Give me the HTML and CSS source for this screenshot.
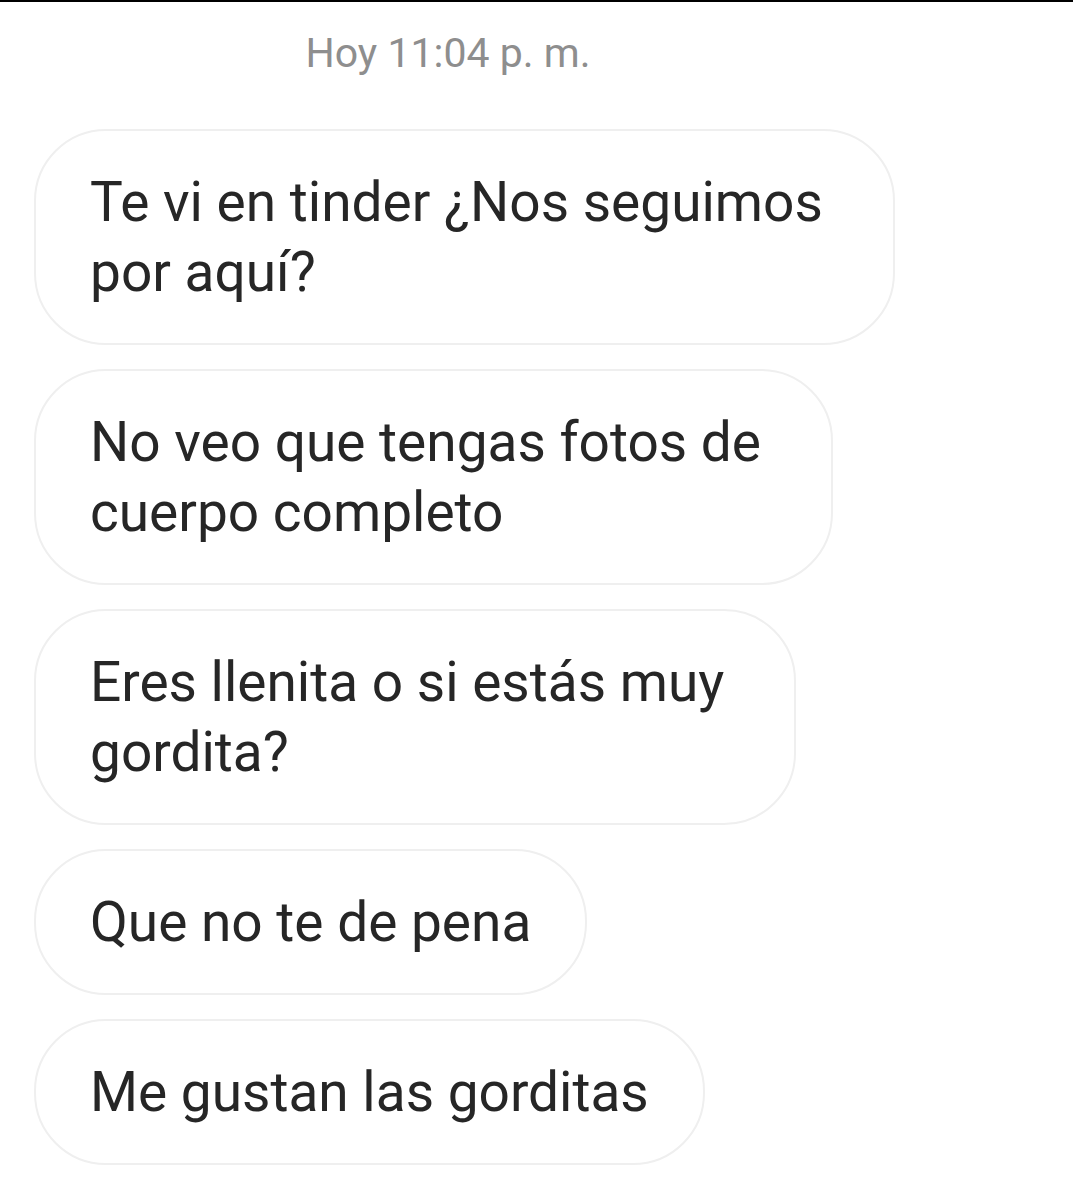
FILE: index.html
```html
<!DOCTYPE html>
<html lang="es">
<head>
    <meta charset="UTF-8">
    <meta name="viewport" content="width=device-width, initial-scale=1.0">
    <title>Mensajes</title>
    <link rel="stylesheet" href="styles.css">
</head>
<body>
    <div class="thread">
        <div class="timestamp">Hoy 11:04 p. m.</div>

        <div class="bubble multiline">Te vi en tinder ¿Nos seguimos<br>por aquí?</div>
        <div class="bubble multiline">No veo que tengas fotos de<br>cuerpo completo</div>
        <div class="bubble multiline">Eres llenita o si estás muy<br>gordita?</div>
        <div class="bubble">Que no te de pena</div>
        <div class="bubble">Me gustan las gorditas</div>
    </div>
</body>
</html>
```

FILE: styles.css
```css
body {
    margin: 0;
    background: #fff;
    font-family: Roboto, "Noto Sans", sans-serif;
    border-top: 2px solid #000;
    min-height: 1198px;
}
.thread {
    width: 896px;
    padding: 27px 0 0 34px;
    box-sizing: border-box;
    display: flex;
    flex-direction: column;
    align-items: flex-start;
    gap: 24px;
}
.timestamp {
    align-self: stretch;
    text-align: center;
    margin-left: -34px;
    margin-bottom: 28px;
    font-size: 41px;
    color: #8e8e8e;
}
.bubble {
    border: 2px solid #efefef;
    border-radius: 72px;
    padding: 36px 54px;
    font-size: 55px;
    line-height: 70px;
    color: #262626;
    white-space: nowrap;
}
.bubble.multiline {
    padding-right: 70px;
}
```
